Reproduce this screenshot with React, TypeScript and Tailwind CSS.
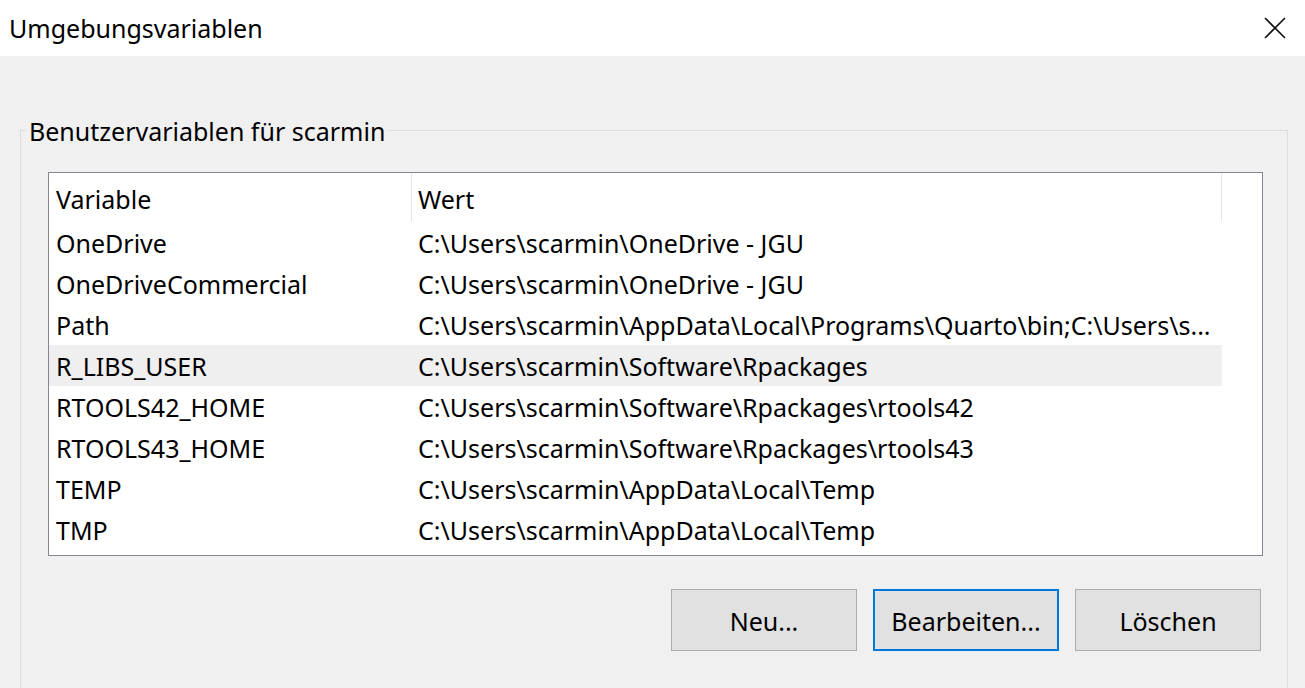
const rows: [string, string][] = [
  ["OneDrive", "C:\\Users\\scarmin\\OneDrive - JGU"],
  ["OneDriveCommercial", "C:\\Users\\scarmin\\OneDrive - JGU"],
  ["Path", "C:\\Users\\scarmin\\AppData\\Local\\Programs\\Quarto\\bin;C:\\Users\\s..."],
  ["R_LIBS_USER", "C:\\Users\\scarmin\\Software\\Rpackages"],
  ["RTOOLS42_HOME", "C:\\Users\\scarmin\\Software\\Rpackages\\rtools42"],
  ["RTOOLS43_HOME", "C:\\Users\\scarmin\\Software\\Rpackages\\rtools43"],
  ["TEMP", "C:\\Users\\scarmin\\AppData\\Local\\Temp"],
  ["TMP", "C:\\Users\\scarmin\\AppData\\Local\\Temp"],
];

const selected = 3;

export default function App() {
  return (
    <div className="w-[1305px] h-[688px] overflow-hidden bg-[#f0f0f0] text-black font-['Noto_Sans',sans-serif] text-[25px] leading-[1.2]">
      {/* title bar */}
      <div className="h-[56px] bg-white flex items-center justify-between pl-[9px] pr-[19px]">
        <span className="text-[25px]">Umgebungsvariablen</span>
        <svg width="22" height="22" viewBox="0 0 22 22" className="mb-[1px]">
          <path d="M1 1 L21 21 M21 1 L1 21" stroke="#111" strokeWidth="1.6" fill="none" />
        </svg>
      </div>

      <div className="pt-[74px] pl-[20px] pr-[17px]">
        <div className="relative border border-[#dcdcdc] h-[600px] pl-[27px] pr-[24px] pt-[41px]">
          <span className="absolute left-[5px] top-[-16px] bg-[#f0f0f0] px-[3px] h-[32px] flex items-center">
            Benutzervariablen für scarmin
          </span>

          <div className="border border-[#828790] bg-white h-[384px]">
            <div className="flex h-[49px]">
              <div className="w-[363px] flex items-center pl-[7px] pt-[4px] border-r border-[#e5e5e5] mb-[1px]">Variable</div>
              <div className="w-[810px] flex items-center pl-[6px] pt-[4px] border-r border-[#e5e5e5] mb-[1px]">Wert</div>
            </div>
            {rows.map(([name, value], i) => (
              <div
                key={name}
                className={`flex h-[41px] w-[1173px] items-center pt-[1px] ${i === selected ? "bg-[#efefef]" : ""}`}
              >
                <div className="w-[363px] pl-[7px] whitespace-nowrap">{name}</div>
                <div className="w-[810px] pl-[6px] whitespace-nowrap">{value}</div>
              </div>
            ))}
          </div>

          <div className="flex justify-end gap-[16px] mt-[33px] pr-[2px]">
            <button className="w-[186px] h-[62px] bg-[#e1e1e1] border border-[#adadad] pt-[2px]">Neu...</button>
            <button className="w-[186px] h-[62px] bg-[#e1e1e1] border-2 border-[#0078d7] pt-[2px]">Bearbeiten...</button>
            <button className="w-[186px] h-[62px] bg-[#e1e1e1] border border-[#adadad] pt-[2px]">Löschen</button>
          </div>
        </div>
      </div>
    </div>
  );
}
